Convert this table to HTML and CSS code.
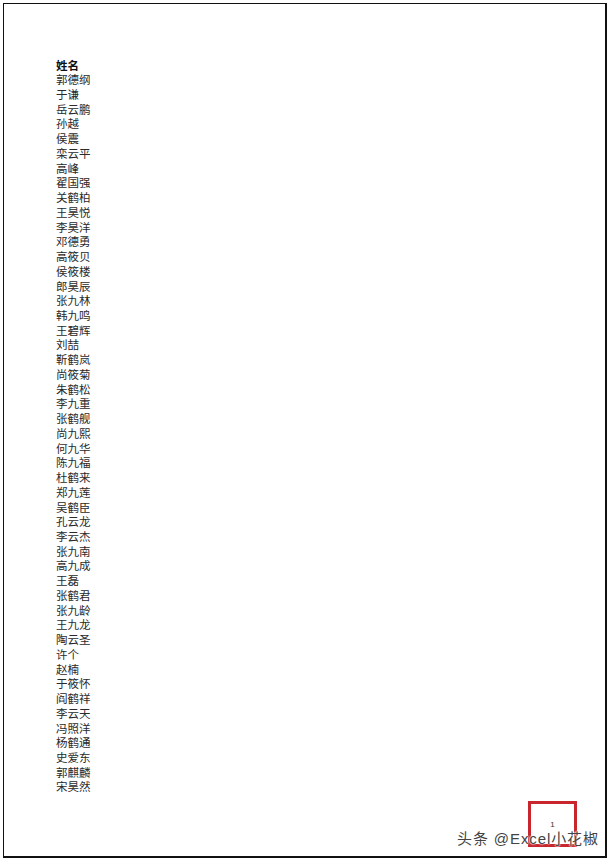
FILE: index.html
```html
<!DOCTYPE html>
<html lang="zh-CN">
<head>
<meta charset="utf-8">
<title>姓名</title>
<link rel="stylesheet" href="styles.css">
</head>
<body>
<div class="page">
  <ul class="names">
    <li class="head">姓名</li>
    <li>郭德纲</li><li>于谦</li><li>岳云鹏</li><li>孙越</li><li>侯震</li><li>栾云平</li><li>高峰</li><li>翟国强</li><li>关鹤柏</li><li>王昊悦</li><li>李昊洋</li><li>邓德勇</li><li>高筱贝</li><li>侯筱楼</li><li>郎昊辰</li><li>张九林</li><li>韩九鸣</li><li>王碧辉</li><li>刘喆</li><li>靳鹤岚</li><li>尚筱菊</li><li>朱鹤松</li><li>李九重</li><li>张鹤舰</li><li>尚九熙</li><li>何九华</li><li>陈九福</li><li>杜鹤来</li><li>郑九莲</li><li>吴鹤臣</li><li>孔云龙</li><li>李云杰</li><li>张九南</li><li>高九成</li><li>王磊</li><li>张鹤君</li><li>张九龄</li><li>王九龙</li><li>陶云圣</li><li>许个</li><li>赵楠</li><li>于筱怀</li><li>阎鹤祥</li><li>李云天</li><li>冯照洋</li><li>杨鹤通</li><li>史爱东</li><li>郭麒麟</li><li>宋昊然</li>
  </ul>
  <div class="pagenum">1</div>
  <div class="mark">头条 @Excel小花椒</div>
</div>
</body>
</html>
```
FILE: styles.css
```css
html, body {
  margin: 0;
  padding: 0;
  background: #ffffff;
}
body {
  width: 609px;
  height: 860px;
  overflow: hidden;
  font-family: "Noto Sans CJK SC", "Noto Sans", sans-serif;
}
.page {
  position: relative;
  box-sizing: border-box;
  margin: 3px 0 0 3px;
  width: 604px;
  height: 855px;
  border-left: 1px solid #111;
  border-top: 1px solid #111;
  border-right: 2px solid #111;
  border-bottom: 2px solid #111;
  padding: 53.5px 0 0 52px;
}
.names {
  list-style: none;
  margin: 0;
  padding: 0;
}
.names li {
  font-size: 11.5px;
  line-height: 14.74px;
  height: 14.74px;
  color: #2a2a2a;
  white-space: nowrap;
}
.names li.head {
  font-weight: 700;
  color: #111;
}
.pagenum {
  position: absolute;
  left: 524px;
  top: 797px;
  width: 43px;
  border: 3px solid #c9252c;
  font-size: 8px;
  line-height: 8px;
  text-align: center;
  padding-top: 17px;
  box-sizing: content-box;
  height: 23px;
  color: #333;
  font-family: "Liberation Sans", sans-serif;
}
.mark {
  position: absolute;
  left: 453px;
  top: 826px;
  font-size: 15px;
  line-height: 18px;
  letter-spacing: 0.9px;
  color: #444;
  white-space: nowrap;
  font-family: "Liberation Sans", "Noto Sans CJK SC", sans-serif;
  text-shadow: 0 0 2px #fff, 0 0 2px #fff, 0 0 1px #fff;
}
```
